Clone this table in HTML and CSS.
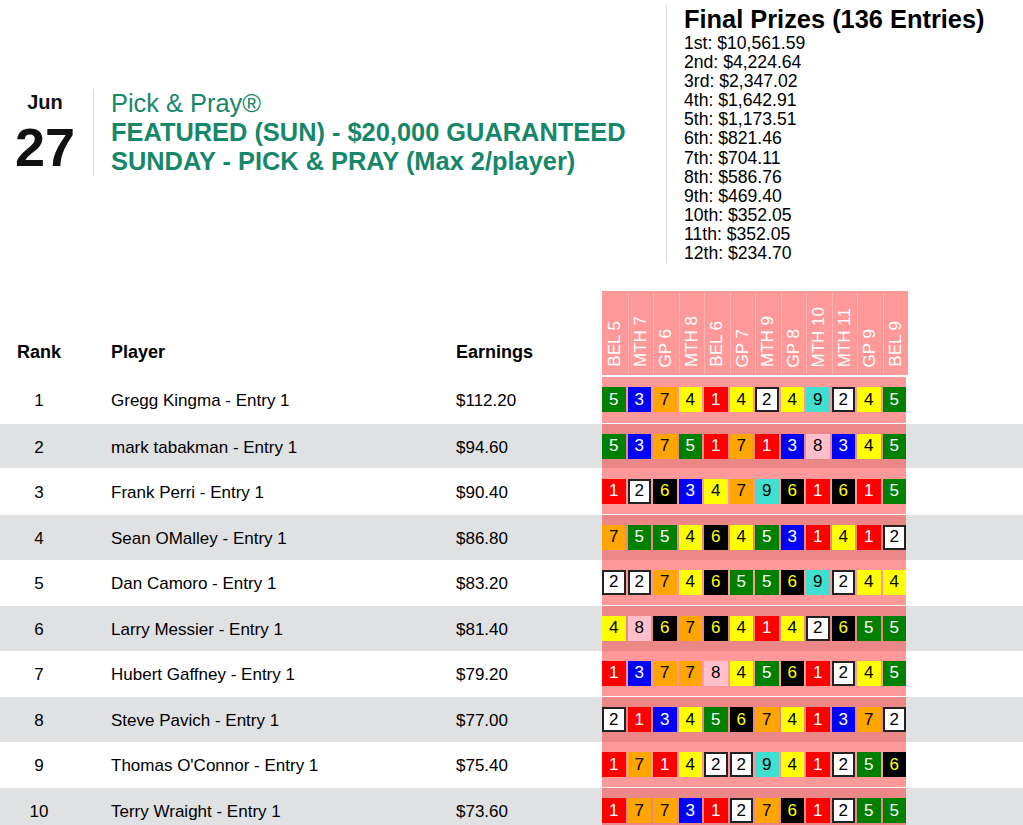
FILE: index.html
```html
<!DOCTYPE html>
<html lang="en">
<head>
<meta charset="utf-8">
<title>Pick &amp; Pray Results</title>
<link rel="stylesheet" href="styles.css">
</head>
<body>
<header class="top">
  <div class="event">
    <div class="date">
      <div class="month">Jun</div>
      <div class="day">27</div>
    </div>
    <div class="title">
      <div class="brand">Pick &amp; Pray®</div>
      <div class="name">FEATURED (SUN) - $20,000 GUARANTEED</div>
      <div class="name">SUNDAY - PICK &amp; PRAY (Max 2/player)</div>
    </div>
  </div>
  <div class="prizes">
    <div class="prizes-title">Final Prizes (136 Entries)</div>
    <ul class="prize-list">
      <li>1st: $10,561.59</li>
      <li>2nd: $4,224.64</li>
      <li>3rd: $2,347.02</li>
      <li>4th: $1,642.91</li>
      <li>5th: $1,173.51</li>
      <li>6th: $821.46</li>
      <li>7th: $704.11</li>
      <li>8th: $586.76</li>
      <li>9th: $469.40</li>
      <li>10th: $352.05</li>
      <li>11th: $352.05</li>
      <li>12th: $234.70</li>
    </ul>
  </div>
</header>

<section class="board">
  <div class="thead">
    <div class="th rank">Rank</div>
    <div class="th player">Player</div>
    <div class="th earn">Earnings</div>
    <div class="races">
      <div class="hcol"><span>BEL 5</span></div>
      <div class="hcol"><span>MTH 7</span></div>
      <div class="hcol"><span>GP 6</span></div>
      <div class="hcol"><span>MTH 8</span></div>
      <div class="hcol"><span>BEL 6</span></div>
      <div class="hcol"><span>GP 7</span></div>
      <div class="hcol"><span>MTH 9</span></div>
      <div class="hcol"><span>GP 8</span></div>
      <div class="hcol"><span>MTH 10</span></div>
      <div class="hcol"><span>MTH 11</span></div>
      <div class="hcol"><span>GP 9</span></div>
      <div class="hcol"><span>BEL 9</span></div>
    </div>
  </div>

  <div class="rows">
    <div class="row">
      <div class="rank">1</div><div class="player">Gregg Kingma - Entry 1</div><div class="earn">$112.20</div>
      <div class="picks"><b class="p5">5</b><b class="p3">3</b><b class="p7">7</b><b class="p4">4</b><b class="p1">1</b><b class="p4">4</b><b class="p2">2</b><b class="p4">4</b><b class="p9">9</b><b class="p2">2</b><b class="p4">4</b><b class="p5">5</b></div>
    </div>
    <div class="row alt">
      <div class="rank">2</div><div class="player">mark tabakman - Entry 1</div><div class="earn">$94.60</div>
      <div class="picks"><b class="p5">5</b><b class="p3">3</b><b class="p7">7</b><b class="p5">5</b><b class="p1">1</b><b class="p7">7</b><b class="p1">1</b><b class="p3">3</b><b class="p8">8</b><b class="p3">3</b><b class="p4">4</b><b class="p5">5</b></div>
    </div>
    <div class="row">
      <div class="rank">3</div><div class="player">Frank Perri - Entry 1</div><div class="earn">$90.40</div>
      <div class="picks"><b class="p1">1</b><b class="p2">2</b><b class="p6">6</b><b class="p3">3</b><b class="p4">4</b><b class="p7">7</b><b class="p9">9</b><b class="p6">6</b><b class="p1">1</b><b class="p6">6</b><b class="p1">1</b><b class="p5">5</b></div>
    </div>
    <div class="row alt">
      <div class="rank">4</div><div class="player">Sean OMalley - Entry 1</div><div class="earn">$86.80</div>
      <div class="picks"><b class="p7">7</b><b class="p5">5</b><b class="p5">5</b><b class="p4">4</b><b class="p6">6</b><b class="p4">4</b><b class="p5">5</b><b class="p3">3</b><b class="p1">1</b><b class="p4">4</b><b class="p1">1</b><b class="p2">2</b></div>
    </div>
    <div class="row">
      <div class="rank">5</div><div class="player">Dan Camoro - Entry 1</div><div class="earn">$83.20</div>
      <div class="picks"><b class="p2">2</b><b class="p2">2</b><b class="p7">7</b><b class="p4">4</b><b class="p6">6</b><b class="p5">5</b><b class="p5">5</b><b class="p6">6</b><b class="p9">9</b><b class="p2">2</b><b class="p4">4</b><b class="p4">4</b></div>
    </div>
    <div class="row alt">
      <div class="rank">6</div><div class="player">Larry Messier - Entry 1</div><div class="earn">$81.40</div>
      <div class="picks"><b class="p4">4</b><b class="p8">8</b><b class="p6">6</b><b class="p7">7</b><b class="p6">6</b><b class="p4">4</b><b class="p1">1</b><b class="p4">4</b><b class="p2">2</b><b class="p6">6</b><b class="p5">5</b><b class="p5">5</b></div>
    </div>
    <div class="row">
      <div class="rank">7</div><div class="player">Hubert Gaffney - Entry 1</div><div class="earn">$79.20</div>
      <div class="picks"><b class="p1">1</b><b class="p3">3</b><b class="p7">7</b><b class="p7">7</b><b class="p8">8</b><b class="p4">4</b><b class="p5">5</b><b class="p6">6</b><b class="p1">1</b><b class="p2">2</b><b class="p4">4</b><b class="p5">5</b></div>
    </div>
    <div class="row alt">
      <div class="rank">8</div><div class="player">Steve Pavich - Entry 1</div><div class="earn">$77.00</div>
      <div class="picks"><b class="p2">2</b><b class="p1">1</b><b class="p3">3</b><b class="p4">4</b><b class="p5">5</b><b class="p6">6</b><b class="p7">7</b><b class="p4">4</b><b class="p1">1</b><b class="p3">3</b><b class="p7">7</b><b class="p2">2</b></div>
    </div>
    <div class="row">
      <div class="rank">9</div><div class="player">Thomas O'Connor - Entry 1</div><div class="earn">$75.40</div>
      <div class="picks"><b class="p1">1</b><b class="p7">7</b><b class="p1">1</b><b class="p4">4</b><b class="p2">2</b><b class="p2">2</b><b class="p9">9</b><b class="p4">4</b><b class="p1">1</b><b class="p2">2</b><b class="p5">5</b><b class="p6">6</b></div>
    </div>
    <div class="row alt">
      <div class="rank">10</div><div class="player">Terry Wraight - Entry 1</div><div class="earn">$73.60</div>
      <div class="picks"><b class="p1">1</b><b class="p7">7</b><b class="p7">7</b><b class="p3">3</b><b class="p1">1</b><b class="p2">2</b><b class="p7">7</b><b class="p6">6</b><b class="p1">1</b><b class="p2">2</b><b class="p5">5</b><b class="p5">5</b></div>
    </div>
  </div>
</section>
</body>
</html>
```

FILE: styles.css
```css
* { box-sizing: border-box; }

html, body {
  margin: 0;
  padding: 0;
  background: #fff;
  color: #000;
  font-family: "Liberation Sans", Arial, sans-serif;
}

/* ---------- top ---------- */
.top {
  display: flex;
  align-items: center;
  padding-top: 5px;
}

.event {
  flex: 0 0 666px;
  display: flex;
  align-items: center;
  margin-top: -3px;
}

.date {
  width: 93px;
  padding-right: 3px;
  text-align: center;
  font-weight: bold;
  color: #111;
}

.month {
  font-size: 20px;
  line-height: 22px;
}

.day {
  margin-top: 7px;
  font-size: 54px;
  line-height: 54px;
}

.title {
  border-left: 1px solid #dcdcdc;
  padding-left: 17px;
  color: #17876a;
  font-size: 25.4px;
  line-height: 29px;
}

.name {
  font-weight: bold;
}

.prizes {
  border-left: 1px solid #dcdcdc;
  padding-left: 17px;
}

.prizes-title {
  font-size: 25.4px;
  line-height: 29px;
  font-weight: bold;
}

.prize-list {
  list-style: none;
  margin: 0;
  padding: 0;
  font-size: 17.6px;
  line-height: 19.1px;
}

/* ---------- board ---------- */
.board {
  margin-top: 28px;
}

.thead {
  display: grid;
  grid-template-columns: 78px 378px 146px 306px;
  height: 84px;
  align-items: end;
}

.th {
  font-weight: bold;
  font-size: 18px;
  line-height: 21px;
  padding-bottom: 12px;
}

.rank { text-align: center; }
.player { padding-left: 33px; }

.races {
  align-self: stretch;
  display: grid;
  grid-template-columns: repeat(12, 1fr);
  background: #ff9999;
}

.hcol {
  display: flex;
  flex-direction: column;
  justify-content: flex-end;
  align-items: center;
  padding-bottom: 8px;
  border-left: 1px solid #ffb3b3;
}

.hcol:first-child { border-left: none; }

.hcol span {
  writing-mode: vertical-rl;
  transform: rotate(180deg);
  color: #fff;
  font-size: 17px;
  line-height: 18px;
  white-space: nowrap;
}

.rows {
  margin-top: 2px;
}

.row {
  display: grid;
  grid-template-columns: 78px 378px 146px 304px 1fr;
  height: 45.6px;
  align-items: center;
  font-size: 17px;
  background: #fff;
}

.row > .rank,
.row > .player,
.row > .earn {
  padding-top: 3px;
}

.row.alt {
  background: #e0e1e3;
  border-top: 1px solid #fff;
}

.picks {
  align-self: stretch;
  display: flex;
  align-items: center;
  gap: 2px;
  background: rgba(255, 0, 0, 0.4);
}

.picks b {
  flex: 0 0 23.5px;
  height: 25px;
  display: flex;
  align-items: center;
  justify-content: center;
  font-weight: normal;
  font-size: 17px;
}

.p1 { background: #ff0000; color: #fff; }
.p2 { background: #fff; color: #000; border: 2px solid #222; }
.p3 { background: #0000ff; color: #fff; }
.p4 { background: #ffff00; color: #000; }
.p5 { background: #008000; color: #fff; }
.p6 { background: #000; color: #ffff00; }
.p7 { background: #ffa500; color: #000; }
.p8 { background: #ffc0cb; color: #000; }
.p9 { background: #40e0d0; color: #000; }
```
